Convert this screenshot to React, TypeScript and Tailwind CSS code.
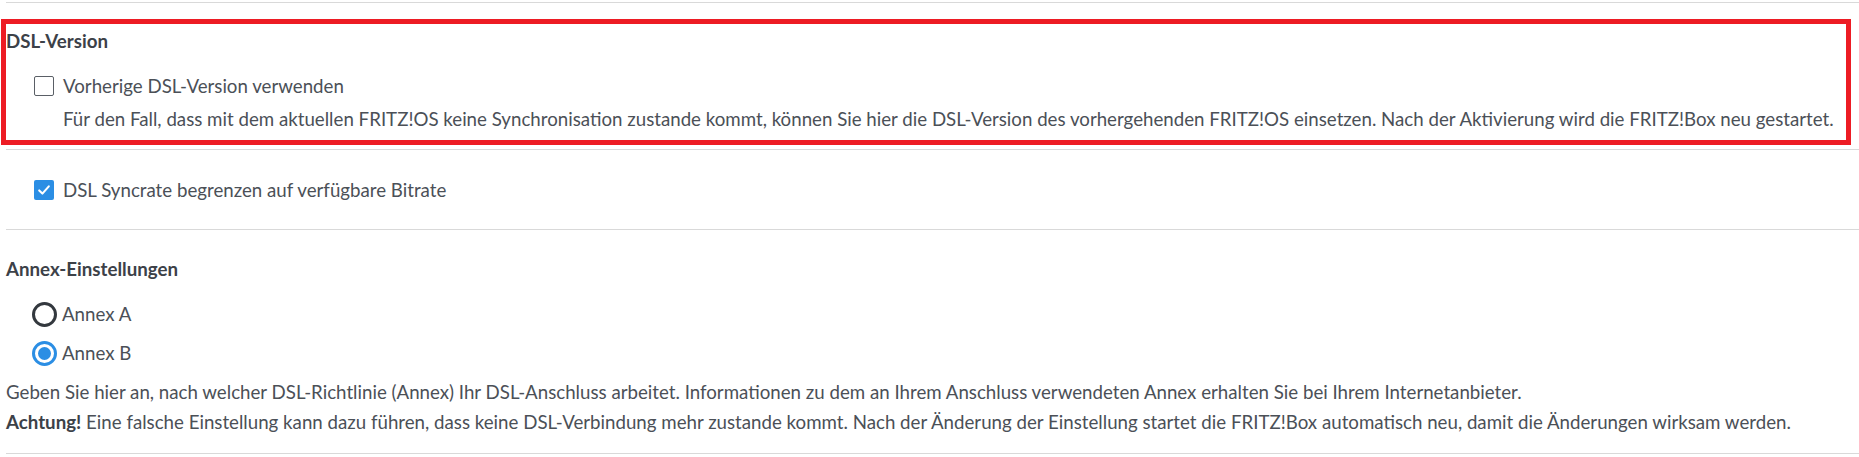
import React from "react";

const Separator: React.FC = () => <div className="h-px bg-[#d9d9d9]" />;

const CheckBox: React.FC<{ checked?: boolean }> = ({ checked }) =>
  checked ? (
    <span className="flex h-[20px] w-[20px] shrink-0 items-center justify-center rounded-[2px] bg-[#2b8ee4]">
      <svg viewBox="0 0 20 20" className="h-[16px] w-[16px]" fill="none" stroke="#fff" strokeWidth="2.6" strokeLinecap="round" strokeLinejoin="round">
        <path d="M4 10.5l4 4 8-9" />
      </svg>
    </span>
  ) : (
    <span className="h-[20px] w-[20px] shrink-0 rounded-[2px] border-[1.5px] border-[#5a5f66] bg-white" />
  );

const Radio: React.FC<{ checked?: boolean }> = ({ checked }) =>
  checked ? (
    <span className="flex h-[25px] w-[25px] shrink-0 items-center justify-center rounded-full border-[3px] border-[#2b8ee4]">
      <span className="h-[13px] w-[13px] rounded-full bg-[#2b8ee4]" />
    </span>
  ) : (
    <span className="h-[25px] w-[25px] shrink-0 rounded-full border-[3px] border-[#33383e]" />
  );

export default function App() {
  return (
    <div className="w-[1859px] bg-white pl-[6px] pt-[2px] font-['Lato',sans-serif] text-[18.7px] leading-[30px] text-[#4b5057]">
      <Separator />

      {/* DSL-Version (marked) */}
      <div className="-ml-[5px] mr-[8px] mt-[16px] border-[5px] border-[#ed1c24] pb-[6px]">
        <div className="mt-[2px] font-bold text-[#3c4148]">DSL-Version</div>
        <label className="ml-[28px] mt-[15px] flex items-center gap-[9px]">
          <CheckBox />
          <span>Vorherige DSL-Version verwenden</span>
        </label>
        <p className="mt-[3px] whitespace-nowrap pl-[57px]">
          Für den Fall, dass mit dem aktuellen FRITZ!OS keine Synchronisation zustande kommt, können Sie hier die DSL-Version des vorhergehenden FRITZ!OS einsetzen. Nach der Aktivierung wird die FRITZ!Box neu gestartet.
        </p>
      </div>

      <div className="mt-[4px]">
        <Separator />
      </div>

      {/* Syncrate */}
      <label className="ml-[28px] mb-[24px] mt-[25px] flex items-center gap-[9px]">
        <CheckBox checked />
        <span>DSL Syncrate begrenzen auf verfügbare Bitrate</span>
      </label>

      <Separator />

      {/* Annex */}
      <div className="pb-[16px] pt-[24px]">
        <div className="font-bold text-[#3c4148]">Annex-Einstellungen</div>
        <label className="ml-[26px] mt-[15px] flex items-center gap-[5px]">
          <Radio />
          <span>Annex A</span>
        </label>
        <label className="ml-[26px] mt-[9px] flex items-center gap-[5px]">
          <Radio checked />
          <span>Annex B</span>
        </label>
        <p className="mt-[9px] whitespace-nowrap">
          Geben Sie hier an, nach welcher DSL-Richtlinie (Annex) Ihr DSL-Anschluss arbeitet. Informationen zu dem an Ihrem Anschluss verwendeten Annex erhalten Sie bei Ihrem Internetanbieter.
        </p>
        <p className="whitespace-nowrap">
          <span className="font-bold text-[#3c4148]">Achtung!</span> Eine falsche Einstellung kann dazu führen, dass keine DSL-Verbindung mehr zustande kommt. Nach der Änderung der Einstellung startet die FRITZ!Box automatisch neu, damit die Änderungen wirksam werden.
        </p>
      </div>

      <Separator />
    </div>
  );
}
